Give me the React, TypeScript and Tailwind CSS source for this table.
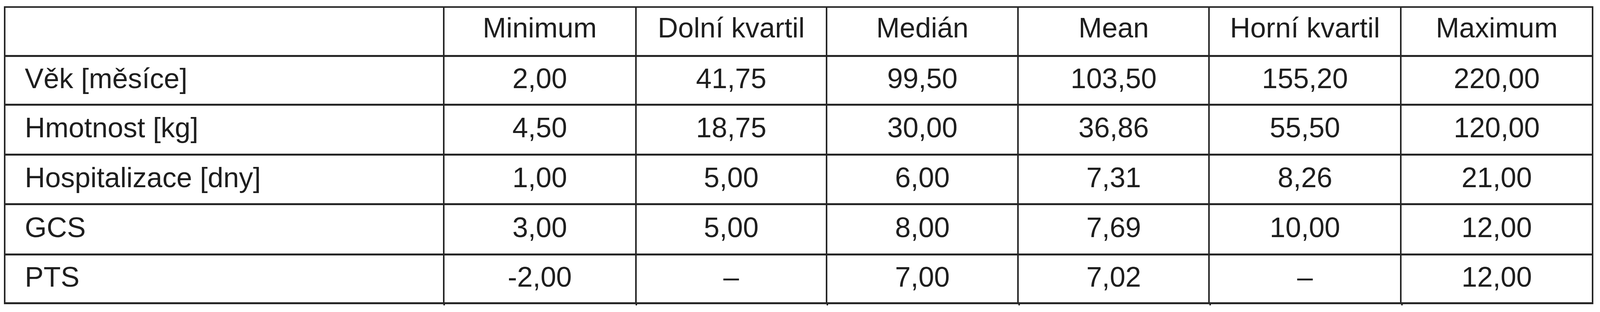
const cols = ['Minimum', 'Dolní kvartil', 'Medián', 'Mean', 'Horní kvartil', 'Maximum'];

// row heights measured line-to-line (content part, without the top rule)
const rows = [
  { label: 'Věk [měsíce]', values: ['2,00', '41,75', '99,50', '103,50', '155,20', '220,00'], h: 'h-[125px]' },
  { label: 'Hmotnost [kg]', values: ['4,50', '18,75', '30,00', '36,86', '55,50', '120,00'], h: 'h-[128px]' },
  { label: 'Hospitalizace [dny]', values: ['1,00', '5,00', '6,00', '7,31', '8,26', '21,00'], h: 'h-[127px]' },
  { label: 'GCS', values: ['3,00', '5,00', '8,00', '7,69', '10,00', '12,00'], h: 'h-[129px]' },
  { label: 'PTS', values: ['-2,00', '–', '7,00', '7,02', '–', '12,00'], h: 'h-[125px]' },
];

// column widths taken from the 5147px reference, kept as proportions
const gridCols =
  'grid grid-cols-[minmax(0,1414fr)_minmax(0,619fr)_minmax(0,614fr)_minmax(0,617fr)_minmax(0,615fr)_minmax(0,617fr)_minmax(0,618fr)]';

export default function App() {
  return (
    <div className="w-full h-[800px] bg-white overflow-hidden text-[#1e1e1e] font-['Liberation_Sans',Arial,sans-serif] text-[max(72px,1.67vw)] leading-[1.15]">
      <div className="ml-[0.233vw] mr-[0.408vw] pt-[16px]">
        <div className={`${gridCols} border-r-4 border-b-[5px] border-[#262626]`}>
          {/* header */}
          <div className="h-[125px] border-l-4 border-t-4 border-[#262626]" />
          {cols.map((c) => (
            <div
              key={c}
              className="h-[125px] border-l-4 border-t-4 border-[#262626] pb-[18px] flex items-center justify-center whitespace-nowrap"
            >
              {c}
            </div>
          ))}

          {rows.map((r) => (
            <div key={r.label} className="contents">
              <div className={`${r.h} border-l-4 border-t-[5px] border-[#262626] pb-[10px] pl-[1.22vw] flex items-center whitespace-nowrap`}>
                {r.label}
              </div>
              {r.values.map((v, i) => (
                <div
                  key={i}
                  className={`${r.h} border-l-4 border-t-[5px] border-[#262626] pb-[10px] flex items-center justify-center whitespace-nowrap`}
                >
                  {v}
                </div>
              ))}
            </div>
          ))}
        </div>

        {/* inner rules run a little past the bottom line */}
        <div className={`${gridCols} h-[3px]`}>
          <div />
          {cols.map((c) => (
            <div key={c} className="border-l-4 border-[#262626]" />
          ))}
        </div>
      </div>
    </div>
  );
}
